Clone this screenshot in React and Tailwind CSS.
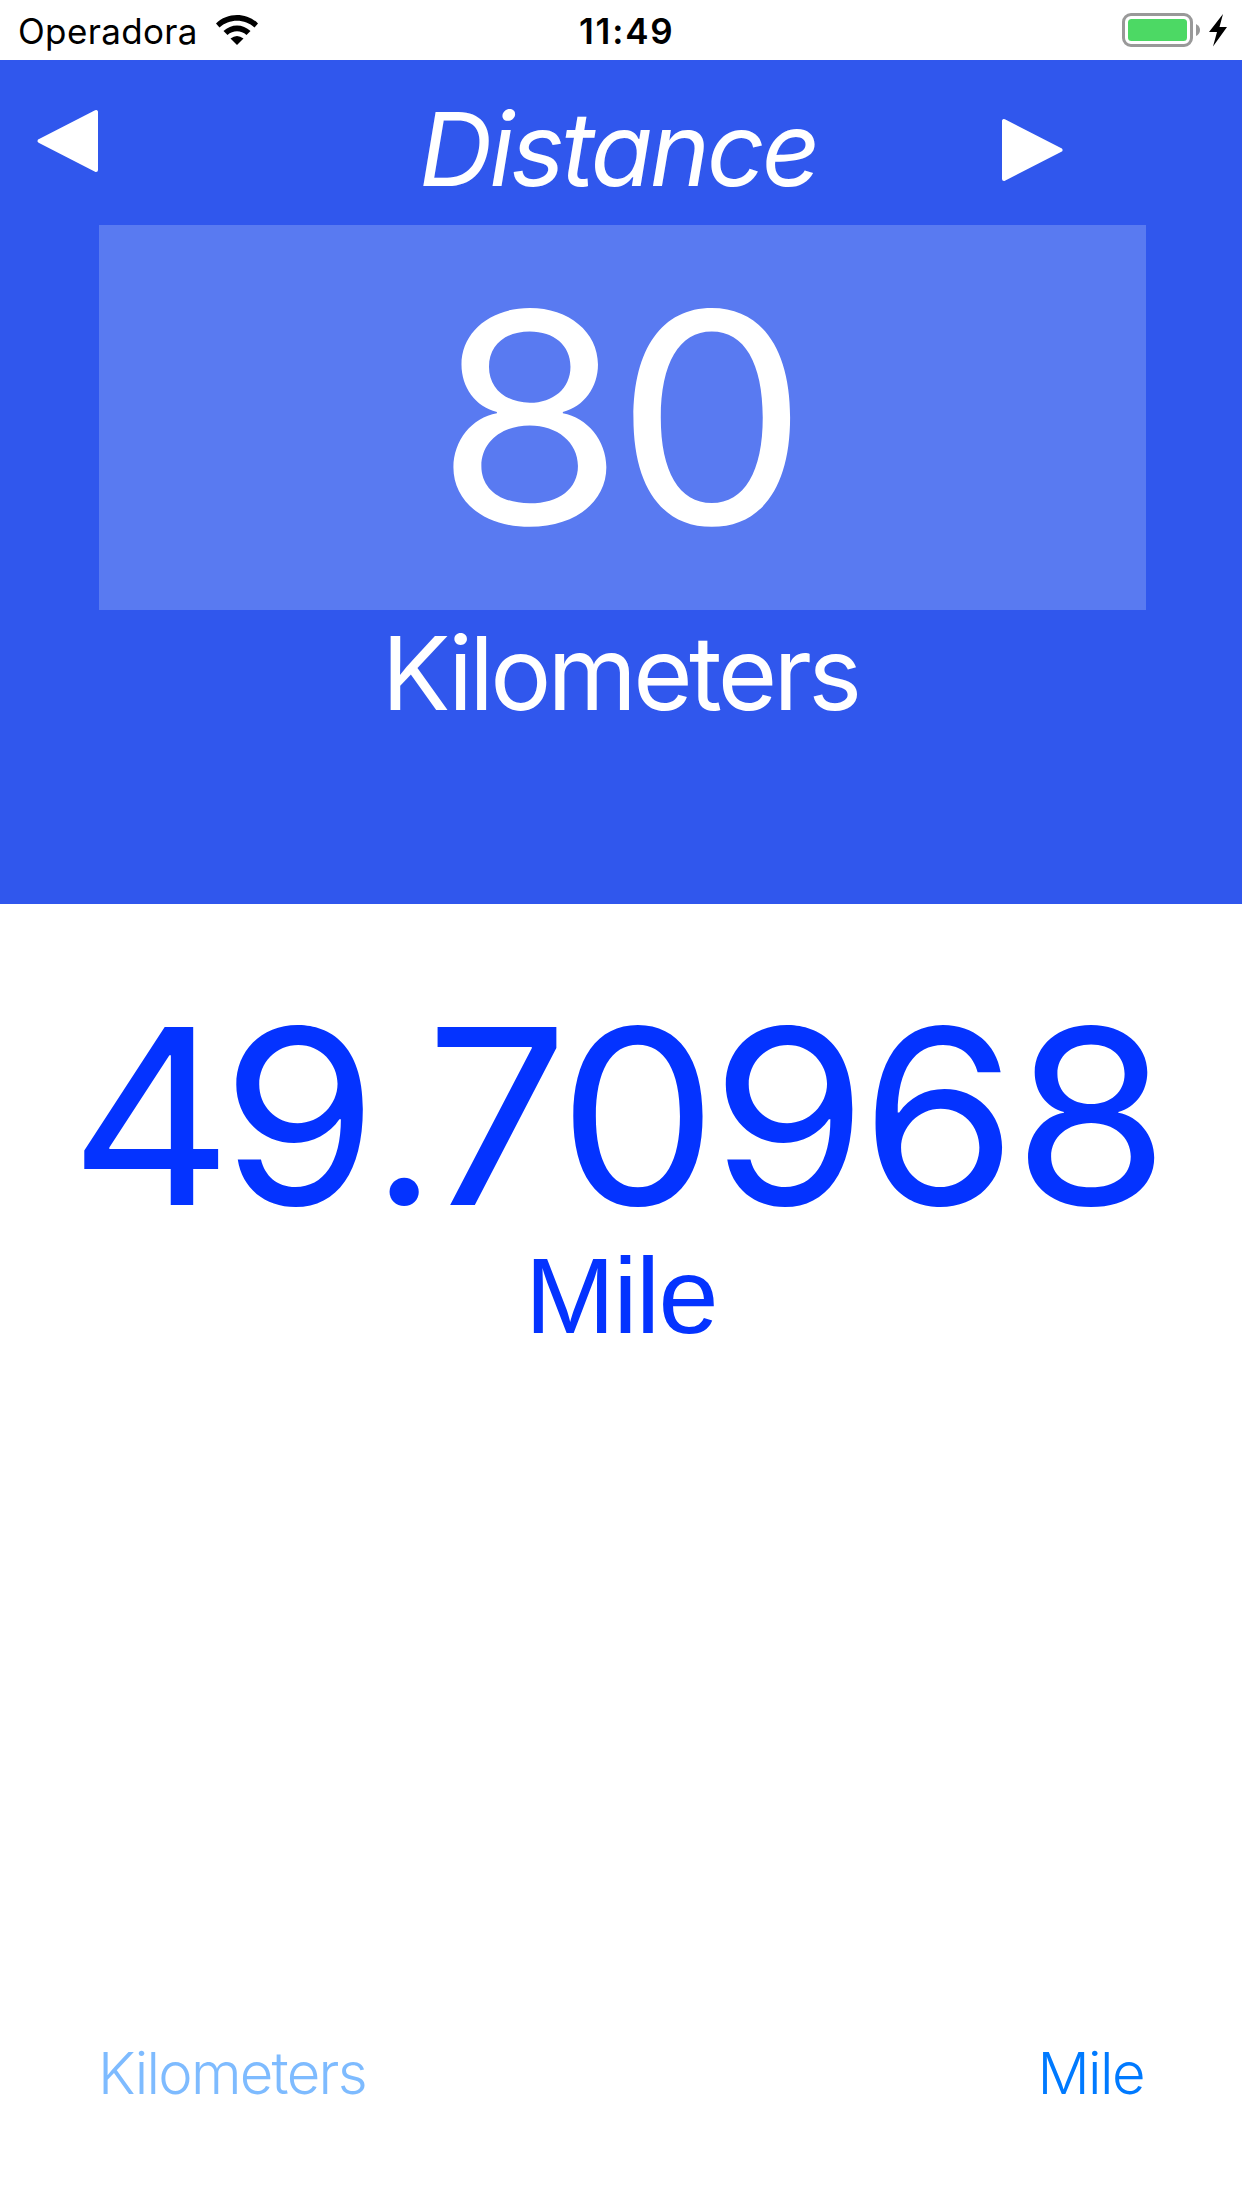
import React from "react";

function StatusBar() {
  return (
    <div className="flex h-[60px] w-full shrink-0 bg-white text-[35px] leading-[63px] text-black">
      <div className="w-[216px] pl-[18px] tracking-[0.35px]">Operadora</div>
      <svg className="h-[60px] w-[42px]" viewBox="0 0 42 60">
        <path d="M0 23.500C11 12 31 12 42 23.500L38.500 27.500C29 18.500 13 18.500 3.500 27.500Z" fill="black" />
        <path d="M7.500 31C15 23.500 27 23.500 34.500 31L30.500 35C25 30 17 30 11.500 35Z" fill="black" />
        <path d="M14.500 38.500Q21 33.500 27.500 38.500L21 45Z" fill="black" />
      </svg>
      <div className="ml-[321px] w-[110px] font-semibold tracking-[1.8px]">11:49</div>
      <svg className="ml-auto h-[60px] w-[122px]" viewBox="0 0 122 60">
        <rect x="3.500" y="14.500" width="68" height="31" rx="7.500" fill="white" stroke="#999" strokeWidth="3" />
        <rect x="8" y="19" width="59" height="22" rx="3.500" fill="#4cd964" />
        <path d="M76 24Q80 26 80 30T76 36Z" fill="#999" />
        <path d="M103 14L89 32H97L93 46.500L107 27H99.500Z" fill="black" />
      </svg>
    </div>
  );
}

export default function App() {
  return (
    <div className="flex h-[2208px] w-[1242px] flex-col overflow-hidden bg-white font-['Inter','Liberation_Sans',sans-serif]">
      <StatusBar />
      <main className="h-[844px] shrink-0 bg-[#3057ed] text-white">
        <div className="flex h-[165px] pl-[36px]">
          <svg className="mt-[48px] h-[66px] w-[64px]" viewBox="0 0 64 66" fill="white" stroke="white" strokeWidth="4" strokeLinejoin="round"><path d="M3.500 33L60 4V62Z" /></svg>
          <h1 className="ml-[319px] w-[581px] whitespace-nowrap text-[102px] italic leading-[178px] tracking-[-3.3px]">Distance</h1>
          <svg className="mt-[57px] h-[66px] w-[64px]" viewBox="0 0 64 66" fill="white" stroke="white" strokeWidth="4" strokeLinejoin="round"><path d="M4 4V62L60.500 33Z" /></svg>
        </div>
        <div className="ml-[99px] h-[385px] w-[1047px] bg-[#597af1] pr-[10px] text-center">
          <span className="inline-block scale-x-[1.045] text-[293px] leading-[386px] tracking-[-9px]">80</span>
        </div>
        <div className="pr-[2px] text-center text-[102px] leading-[126px] tracking-[-3.7px]">Kilometers</div>
      </main>
      <section className="pt-[113px] text-center text-[#0433ff]">
        <div className="h-[200px] pr-[8px] text-[244px] leading-[200px]">
          <span className="inline-block scale-x-[1.035]">
            <span className="tracking-[-11px]">4</span>
            <span className="tracking-[-5.5px]">9</span>
            <span className="text-[214px] leading-none tracking-[-10px]">.</span>
            <span className="tracking-[-10px]">7</span>
            <span className="tracking-[-6.6px]">09</span>
            <span className="tracking-[-4px]">68</span>
          </span>
        </div>
        <div className="mt-[19px] font-['Liberation_Sans',sans-serif] text-[108px] leading-[120px] tracking-[-1.5px]">Mile</div>
      </section>
      <footer className="mt-auto flex justify-between px-[98px] pb-[100px] text-[58px] font-light leading-[70px] text-[#007aff]">
        <span className="tracking-[-1.75px] opacity-50">Kilometers</span>
        <span className="tracking-[-1.6px]">Mile</span>
      </footer>
    </div>
  );
}
